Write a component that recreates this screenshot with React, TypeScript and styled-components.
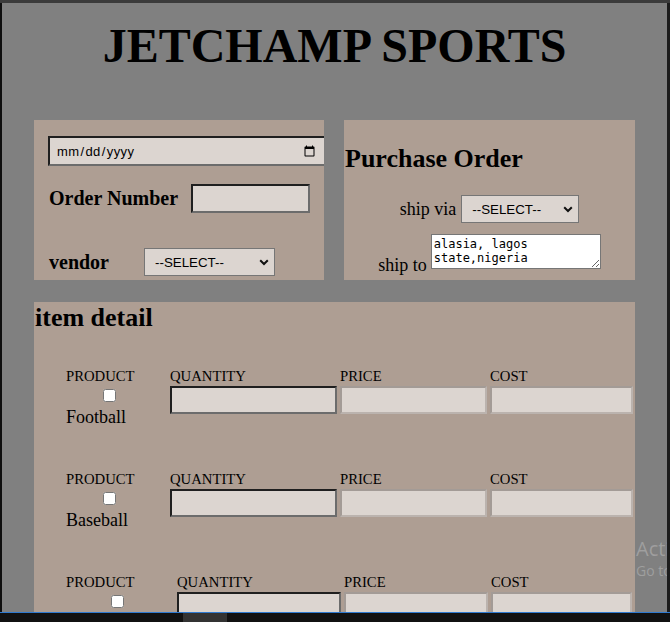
import React from 'react';
import styled, { createGlobalStyle } from 'styled-components';

const GlobalStyle = createGlobalStyle`
  html, body { margin: 0; padding: 0; background: #111; }
  body { font-family: "Liberation Serif", "Times New Roman", serif; color: #000; }
  * { box-sizing: border-box; }
`;

const Screen = styled.div`
  width: 670px;
  height: 622px;
  display: flex;
  flex-direction: column;
  overflow: hidden;
  background: #111;
`;

const TopEdge = styled.div`
  flex: none;
  height: 3px;
  background: #3b3b3b;
`;

const WindowBody = styled.div`
  flex: 1;
  min-height: 0;
  display: flex;
  border-left: 2px solid #0e0e0e;
  border-right: 3px solid #1c1c1c;
`;

const Viewport = styled.main`
  flex: 1;
  position: relative;
  overflow: hidden;
  background: #808080;
`;

const Taskbar = styled.footer`
  flex: none;
  height: 10px;
  display: flex;
  padding-left: 183px;
  border-top: 1px solid #2f7ad0;
  background: #111;
`;

const TaskItem = styled.div`
  width: 44px;
  background: #333;
`;

const Title = styled.h1`
  margin: 16px 0 0;
  text-align: center;
  font-size: 48px;
  line-height: 53px;
  font-weight: bold;
`;

const TopPanels = styled.div`
  display: grid;
  grid-template-columns: 290px 291px;
  column-gap: 20px;
  margin: 48px 32px 0;
`;

const Panel = styled.section`
  height: 160px;
  overflow: hidden;
  background: #ae9e93;
`;

const OrderPanel = styled(Panel)`
  padding: 16px 0 0 14px;
`;

const ShipPanel = styled(Panel)`
  padding-top: 24px;
`;

const DateInput = styled.input`
  display: block;
  width: 278px;
  height: 30px;
  padding: 0 6px;
  border: 2px solid;
  border-color: #1f1f1f #6c6c6c #6c6c6c #1f1f1f;
  background: #dcd5d0;
  font: 13px "Liberation Sans", Arial, sans-serif;
  letter-spacing: 0.4px;
  color: #000;
`;

const FieldRow = styled.div<{ $gap: number; $top: number }>`
  display: flex;
  align-items: center;
  gap: ${p => p.$gap}px;
  margin-top: ${p => p.$top}px;
  padding-left: 1px;
`;

const FieldLabel = styled.label`
  font-size: 20px;
  line-height: 23px;
  font-weight: bold;
`;

const TextBox = styled.input`
  width: 119px;
  height: 29px;
  border: 2px solid;
  border-color: #1f1f1f #6c6c6c #6c6c6c #1f1f1f;
  background: #dcd5d0;
`;

const SelectWrap = styled.div<{ $w: number }>`
  position: relative;
  flex: none;
  width: ${p => p.$w}px;
  height: 28px;
`;

const Select = styled.select`
  appearance: none;
  width: 100%;
  height: 100%;
  padding: 0 0 0 10px;
  border: 1px solid #767676;
  border-radius: 0;
  background: #dcd5d0;
  color: #000;
  font: 13.33px "Liberation Sans", Arial, sans-serif;
`;

const Chevron = styled.svg`
  position: absolute;
  right: 6px;
  top: 50%;
  width: 10px;
  height: 7px;
  margin-top: -3px;
  pointer-events: none;
`;

const PanelHeading = styled.h2`
  margin: 0 0 0 1px;
  font-size: 26px;
  line-height: 30px;
  font-weight: bold;
  text-align: left;
`;

const ShipRow = styled.div<{ $top: number; $align: string; $gap: number }>`
  display: flex;
  justify-content: center;
  align-items: ${p => p.$align};
  gap: ${p => p.$gap}px;
  margin-top: ${p => p.$top}px;
`;

const ShipLabel = styled.label`
  font-size: 18px;
  line-height: 20px;
`;

const ShipToLabel = styled(ShipLabel)`
  line-height: 14px;
  margin-bottom: -3px;
`;

const Address = styled.textarea`
  width: 170px;
  height: 35px;
  padding: 2px;
  border: 1px solid #767676;
  background: #fff;
  color: #000;
  font: 12px/14px "DejaVu Sans Mono", "Liberation Mono", monospace;
  resize: both;
  overflow: hidden;
`;

const ItemPanel = styled.section`
  margin: 22px 32px 0;
  padding: 1px 0 60px;
  background: #ae9e93;
`;

const ItemList = styled.div`
  display: flex;
  flex-direction: column;
  gap: 42px;
  margin-top: 34px;
  padding-left: 32px;
`;

const ItemRow = styled.div<{ $cols: string }>`
  display: grid;
  grid-template-columns: ${p => p.$cols};
  column-gap: 3px;
  align-items: start;
`;

const Cell = styled.div`
  display: flex;
  flex-direction: column;
  align-items: flex-start;
`;

const ColLabel = styled.span`
  font-size: 14.7px;
  line-height: 18px;
`;

const Check = styled.input<{ $indent: number }>`
  width: 13px;
  height: 13px;
  margin: 4px 0 5px ${p => p.$indent}px;
`;

const ProductName = styled.span`
  font-size: 18px;
  line-height: 21px;
`;

const AmountInput = styled.input<{ $editable?: boolean }>`
  width: 100%;
  height: 28px;
  margin-top: 1px;
  border: 2px solid;
  border-color: ${p =>
    p.$editable ? '#1f1f1f #6c6c6c #6c6c6c #1f1f1f' : '#a39b96 #bbb3ae #bbb3ae #a39b96'};
  background: #dcd5d0;
`;

const Watermark = styled.div`
  position: absolute;
  left: 634px;
  top: 534px;
  white-space: nowrap;
  color: rgba(255, 255, 255, 0.25);
  font-family: "Open Sans", "Noto Sans", sans-serif;
  pointer-events: none;
`;

const WatermarkTitle = styled.div`
  font-size: 20px;
  line-height: 24px;
`;

const WatermarkSub = styled.div`
  font-size: 14px;
  line-height: 20px;
`;

const ChevronIcon = () => (
  <Chevron viewBox="0 0 10 7">
    <path d="M1.2 1.2 L5 5 L8.8 1.2" fill="none" stroke="#111" strokeWidth="2" />
  </Chevron>
);

const SelectBox = ({ width }: { width: number }) => (
  <SelectWrap $w={width}>
    <Select defaultValue="">
      <option value="">--SELECT--</option>
      <option value="a">Option A</option>
    </Select>
    <ChevronIcon />
  </SelectWrap>
);

type Item = { name: string; cols: string; indent: number };

const items: Item[] = [
  { name: 'Football', cols: '101px 167px 147px 143px', indent: 37 },
  { name: 'Baseball', cols: '101px 167px 147px 143px', indent: 37 },
  { name: 'Basketball', cols: '108px 164px 144px 141px', indent: 45 },
];

export default function App() {
  return (
    <>
      <GlobalStyle />
      <Screen>
        <TopEdge />
        <WindowBody>
          <Viewport>
            <Title>JETCHAMP SPORTS</Title>
            <TopPanels>
              <OrderPanel>
                <DateInput type="date" />
                <FieldRow $gap={13} $top={18}>
                  <FieldLabel>Order Number</FieldLabel>
                  <TextBox type="text" />
                </FieldRow>
                <FieldRow $gap={35} $top={35}>
                  <FieldLabel>vendor</FieldLabel>
                  <SelectBox width={131} />
                </FieldRow>
              </OrderPanel>
              <ShipPanel>
                <PanelHeading>Purchase Order</PanelHeading>
                <ShipRow $top={21} $align="center" $gap={5}>
                  <ShipLabel>ship via</ShipLabel>
                  <SelectBox width={118} />
                </ShipRow>
                <ShipRow $top={11} $align="flex-end" $gap={4}>
                  <ShipToLabel>ship to</ShipToLabel>
                  <Address defaultValue="alasia, lagos state,nigeria" />
                </ShipRow>
              </ShipPanel>
            </TopPanels>
            <ItemPanel>
              <PanelHeading>item detail</PanelHeading>
              <ItemList>
                {items.map(item => (
                  <ItemRow key={item.name} $cols={item.cols}>
                    <Cell>
                      <ColLabel>PRODUCT</ColLabel>
                      <Check type="checkbox" $indent={item.indent} />
                      <ProductName>{item.name}</ProductName>
                    </Cell>
                    <Cell>
                      <ColLabel>QUANTITY</ColLabel>
                      <AmountInput type="text" $editable />
                    </Cell>
                    <Cell>
                      <ColLabel>PRICE</ColLabel>
                      <AmountInput type="text" readOnly />
                    </Cell>
                    <Cell>
                      <ColLabel>COST</ColLabel>
                      <AmountInput type="text" readOnly />
                    </Cell>
                  </ItemRow>
                ))}
              </ItemList>
            </ItemPanel>
            <Watermark>
              <WatermarkTitle>Activate Windows</WatermarkTitle>
              <WatermarkSub>Go to Settings to activate Windows.</WatermarkSub>
            </Watermark>
          </Viewport>
        </WindowBody>
        <Taskbar>
          <TaskItem />
        </Taskbar>
      </Screen>
    </>
  );
}
